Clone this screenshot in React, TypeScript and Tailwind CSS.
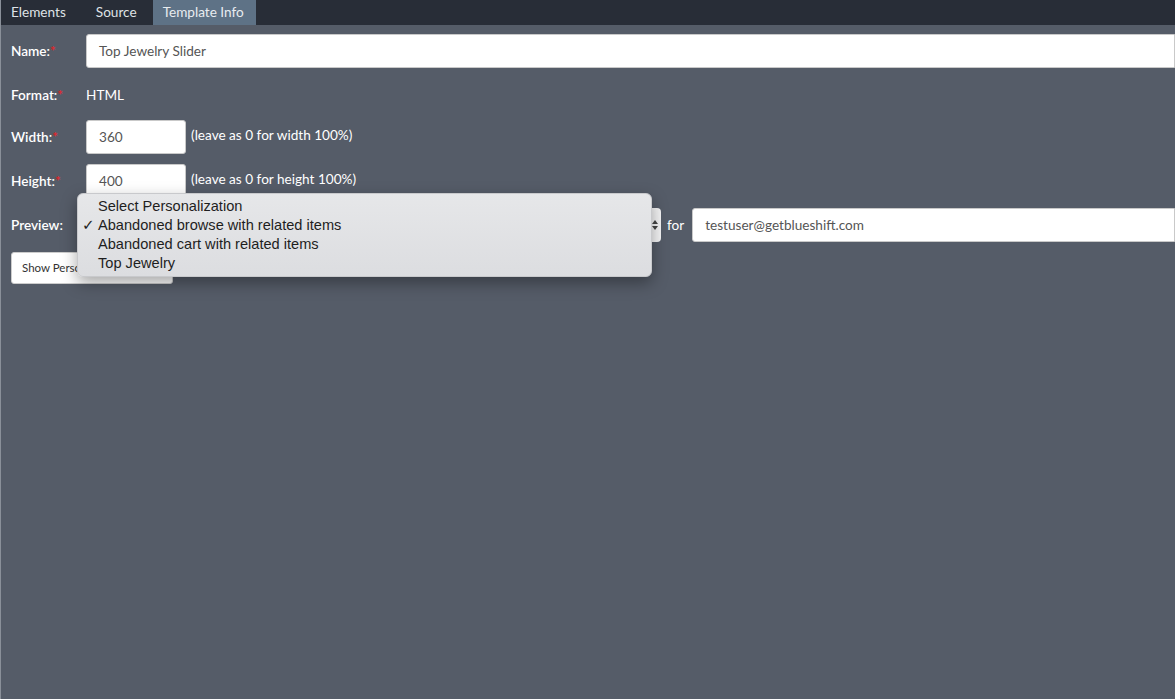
import React from "react";

const font = { fontFamily: "Lato, 'Open Sans', sans-serif" };

function Label({ text, star = true }: { text: string; star?: boolean }) {
  return (
    <div className="w-[75px] shrink-0 text-[13.6px] font-semibold text-white">
      {text}
      {star && <span className="text-[#e0262b]">*</span>}
    </div>
  );
}

export default function App() {
  return (
    <div
      className="relative h-[699px] w-[1175px] overflow-hidden border-l border-[#8a9099] bg-[#555c68] text-[13.6px] text-white"
      style={font}
    >
      <div className="flex h-[25px] items-stretch bg-[#282d37] text-[13.6px]">
        <div className="flex items-center px-[10px] text-[#dfe2e6]">Elements</div>
        <div className="flex items-center pl-[20px] pr-[10px] text-[#dfe2e6]">Source</div>
        <div className="ml-[6px] flex items-center bg-[#5e7286] pl-[10px] pr-[12px] text-[#e8ecf0]">Template Info</div>
      </div>

      <div className="flex flex-col pl-[10px]">
        <div className="mt-[9px] flex items-center">
          <Label text="Name:" />
          <div className="flex h-[34px] flex-1 items-center rounded-l-[3px] border border-[#c9c9c9] bg-white pl-[12px] text-[#555]">
            Top Jewelry Slider
          </div>
        </div>

        <div className="mt-[19px] flex h-[16px] items-center">
          <Label text="Format:" />
          <div className="text-white">HTML</div>
        </div>

        <div className="mt-[17px] flex items-start">
          <div className="flex h-[34px] items-center">
            <Label text="Width:" />
          </div>
          <div className="flex h-[34px] w-[100px] items-center rounded-[3px] border border-[#c9c9c9] bg-white pl-[12px] text-[#555]">
            360
          </div>
          <div className="ml-[5px] mt-[5px] text-white">(leave as 0 for width 100%)</div>
        </div>

        <div className="mt-[10px] flex items-start">
          <div className="flex h-[34px] items-center">
            <Label text="Height:" />
          </div>
          <div className="flex h-[34px] w-[100px] items-center rounded-[3px] border border-[#c9c9c9] bg-white pl-[12px] text-[#555]">
            400
          </div>
          <div className="ml-[5px] mt-[5px] text-white">(leave as 0 for height 100%)</div>
        </div>

        <div className="mt-[10px] flex items-center">
          <div className="w-[66px] shrink-0 font-semibold text-white">Preview:</div>
          <div className="relative flex h-[34px] w-[584px] items-center justify-end rounded-[4px] bg-[#f4f4f5] pr-[2px]">
            <svg width="8" height="14" viewBox="0 0 8 14">
              <path d="M1 6 L4 2 L7 6 Z" fill="#444" />
              <path d="M1 8 L4 12 L7 8 Z" fill="#444" />
            </svg>
          </div>
          <div className="ml-[6px] text-white">for</div>
          <div className="ml-[8px] flex h-[34px] flex-1 items-center rounded-l-[3px] border border-[#c9c9c9] bg-white pl-[12px] text-[#555]">
            testuser@getblueshift.com
          </div>
        </div>

        <div className="mt-[10px]">
          <div className="flex h-[32px] w-[162px] items-center rounded-[3px] border border-[#ccc] bg-white pl-[10px] text-[11.5px] text-[#333]">
            Show Personalization
          </div>
        </div>
      </div>

      <div
        className="absolute left-[76px] top-[193px] w-[575px] rounded-[6px] border border-[#c8c9cc] bg-gradient-to-b from-[#e6e7e9] to-[#dcdde0] py-[3px] text-[14.6px] leading-[19px] text-[#1e1e1e] shadow-[0_6px_16px_rgba(0,0,0,0.35)]"
        style={{ fontFamily: "'Liberation Sans', Arial, sans-serif" }}
      >
        {[
          ["", "Select Personalization"],
          ["✓", "Abandoned browse with related items"],
          ["", "Abandoned cart with related items"],
          ["", "Top Jewelry"],
        ].map(([c, t]) => (
          <div key={t} className="flex">
            <span className="w-[20px] pl-[4px] text-[15px] font-bold" style={{ fontFamily: "'DejaVu Sans', sans-serif" }}>{c}</span>
            <span>{t}</span>
          </div>
        ))}
      </div>
    </div>
  );
}
